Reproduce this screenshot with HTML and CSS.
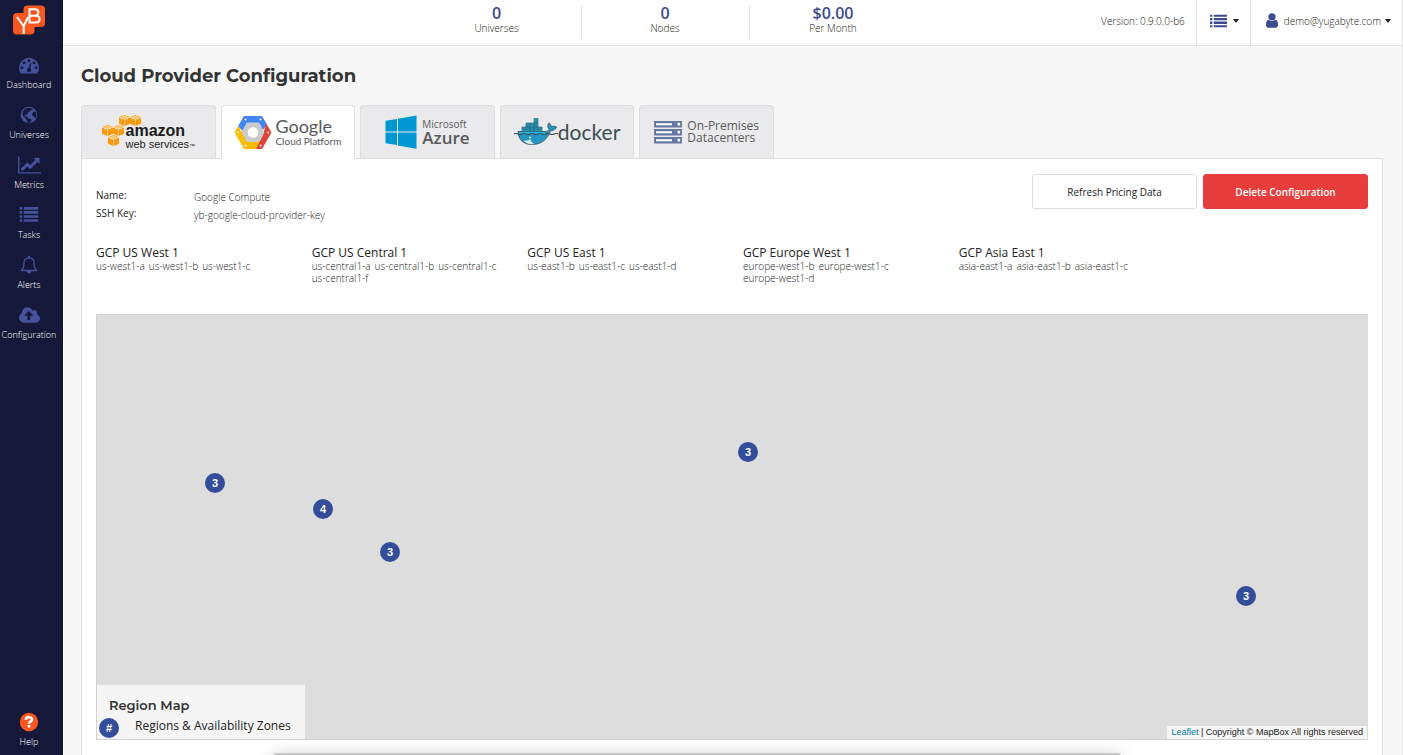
FILE: index.html
```html
<!DOCTYPE html>
<html lang="en">
<head>
<meta charset="utf-8">
<title>Cloud Provider Configuration</title>
<link rel="stylesheet" href="styles.css">
</head>
<body>
<svg width="0" height="0" class="defs" aria-hidden="true">
  <defs>
    <symbol id="list" viewBox="0 0 18 14"><path d="M0 0h2.500v2.500H0zM4 0h14v2.500H4zM0 3.800h2.500v2.500H0zM4 3.800h14v2.500H4zM0 7.600h2.500v2.500H0zM4 7.600h14v2.500H4zM0 11.400h2.500v2.500H0zM4 11.400h14v2.500H4z"/></symbol>
    <symbol id="box" viewBox="0 0 12 12"><path fill="#fbb034" d="M6 0L11.800 2 6 4.200 0.200 2z"/><path fill="#f79a0e" d="M0 2.600L5.700 4.800V12L0 9.600zM12 2.600L6.300 4.800V12l5.700-2.400z"/><path fill="none" stroke="#fde3b0" stroke-width=".6" d="M3 1l6 2.200v2M9 1L3 3.200v2"/></symbol>
  </defs>
</svg>
<div class="app">
  <nav class="sidebar">
    <a class="brand" href="#" aria-label="YugaByte home">
      <svg width="34" height="30" viewBox="0 0 34 30">
        <rect x="11.500" y="0.500" width="21.500" height="21.500" rx="4" fill="#f9571f"/>
        <rect x="1" y="8" width="21.500" height="21.500" rx="4" fill="#f9571f"/>
        <g fill="none" stroke="#fff" stroke-width="2">
          <path d="M5 12l6.700 9 4.500-9M11.700 20.500V29"/>
          <path d="M17.500 4.200v13.300h6.400c5 0 5-6.800 0-6.800h-6.400H23c4.500 0 4.500-6.500 0-6.500z"/>
        </g>
      </svg>
    </a>
    <a class="nav-item" href="#">
      <svg width="20" height="20" viewBox="0 0 1792 1792"><path d="M384 1152q0-53-37.500-90.500t-90.500-37.500-90.500 37.500-37.500 90.500 37.500 90.500 90.500 37.500 90.500-37.500 37.500-90.500zm192-448q0-53-37.500-90.500t-90.500-37.500-90.500 37.500-37.500 90.500 37.500 90.500 90.500 37.500 90.500-37.500 37.500-90.500zm428 481l101-382q6-26-7.500-48.500t-38.500-29.500-48 6.500-30 39.500l-101 382q-60 5-107 43.500t-63 98.500q-20 77 20 146t117 89 146-20 89-117q16-60-6-117t-72-91zm660-33q0-53-37.500-90.500t-90.500-37.500-90.500 37.500-37.500 90.500 37.500 90.500 90.500 37.500 90.500-37.500 37.500-90.500zm-640-640q0-53-37.500-90.500t-90.500-37.500-90.500 37.500-37.500 90.500 37.500 90.500 90.500 37.500 90.500-37.500 37.500-90.500zm448 192q0-53-37.500-90.500t-90.500-37.500-90.500 37.500-37.500 90.500 37.500 90.500 90.500 37.500 90.500-37.500 37.500-90.500zm320 448q0 261-141 483-19 29-54 29h-1402q-35 0-54-29-141-221-141-483 0-182 71-348t191-286 286-191 348-71 348 71 286 191 191 286 71 348z"/></svg>
      <span>Dashboard</span>
    </a>
    <a class="nav-item" href="#">
      <svg width="20" height="20" viewBox="0 0 20 20"><circle cx="10" cy="10" r="8.300"/><path fill="#151838" d="M8.500 3l2.500-.2 2.800 1.400-.8 1-1.600-.2-.4 1.200-1.600 1-1 1.400.6 1-1.600-.4-1.400.8.400 1.600 1.800.2.400 1.400 2.200.2 1.600 1.200-.2 1.600-1.600 1.600-1.200 1.400-.8-1.600-.4-2.200-1.600-1.600-.4-1.400-2-1-.8-2.400.6-2.600L5.500 4.500zM14.200 7l2.200-.6 1 2.400v2.600l-1.200 2-1.200-1.800-1.400-.6-.4-2z"/></svg>
      <span>Universes</span>
    </a>
    <a class="nav-item" href="#">
      <svg width="23" height="20" viewBox="0 0 2048 1792"><path d="M2048 1536v128h-2048v-1536h128v1408h1920zm-128-1248v435q0 21-19.500 29.500t-35.500-7.500l-121-121-633 633q-10 10-23 10t-23-10l-233-233-416 416-192-192 585-585q10-10 23-10t23 10l233 233 464-464-121-121q-16-16-7.500-35.500t29.500-19.500h435q14 0 23 9t9 23z"/></svg>
      <span>Metrics</span>
    </a>
    <a class="nav-item" href="#">
      <svg width="20" height="20" viewBox="0 0 20 20"><use href="#list" x="0.500" y="2" width="19" height="15"/></svg>
      <span>Tasks</span>
    </a>
    <a class="nav-item" href="#">
      <svg width="20" height="20" viewBox="0 0 20 20"><path fill="none" stroke="#43529a" stroke-width="1.300" stroke-linejoin="round" d="M10 2.800c-3.300 0-5 2.400-5 5.200 0 4.500-1.200 6.200-2.800 7.500h15.600C16.200 14.200 15 12.500 15 8c0-2.800-1.700-5.200-5-5.200z"/><path d="M9 1h2v2H9zM7.600 16h4.800c0 3.200-4.800 3.200-4.800 0z"/></svg>
      <span>Alerts</span>
    </a>
    <a class="nav-item" href="#">
      <svg width="21" height="20" viewBox="0 0 1920 1792"><path d="M1280 928q0-14-9-23l-352-352q-9-9-23-9t-23 9l-351 351q-10 12-10 24 0 14 9 23t23 9h224v352q0 13 9.500 22.500t22.500 9.500h192q13 0 22.500-9.500t9.500-22.500v-352h224q13 0 22.500-9.500t9.500-22.500zm640 288q0 159-112.500 271.500t-271.500 112.500h-1088q-185 0-316.500-131.500t-131.500-316.500q0-130 70-240t188-165q-2-30-2-43 0-212 150-362t362-150q156 0 285.500 87t188.500 231q71-62 166-62 106 0 181 75t75 181q0 76-41 138 130 31 213.500 135.500t83.500 238.500z"/></svg>
      <span>Configuration</span>
    </a>
    <a class="nav-item help" href="#">
      <svg width="20" height="20" viewBox="0 0 20 20"><circle cx="10" cy="10" r="9.200" fill="#f9571f"/><path fill="none" stroke="#fff" stroke-width="2.600" d="M6.800 7.800c.3-3.600 6.400-3.400 6.100 0-.2 1.900-2.900 1.800-2.900 4"/><path fill="#fff" d="M8.700 13h2.700v2.500H8.700z"/></svg>
      <span>Help</span>
    </a>
  </nav>

  <div class="page">
    <header class="topbar">
      <dl class="stats">
        <div><dd>0</dd><dt>Universes</dt></div>
        <div><dd>0</dd><dt>Nodes</dt></div>
        <div><dd>$0.00</dd><dt>Per Month</dt></div>
      </dl>
      <div class="tools">
        <span class="version">Version: 0.9.0.0-b6</span>
        <button class="tool" type="button" aria-label="Task list">
          <svg width="17" height="14" viewBox="0 0 18 14"><use href="#list"/></svg>
          <i class="caret"></i>
        </button>
        <button class="tool user" type="button">
          <svg width="12" height="15" viewBox="0 0 12 15"><circle cx="6" cy="3.800" r="3.600"/><path d="M2.600 6.500C.6 7 0 9.500 0 12c0 1.800 1 2.800 2.500 2.800h7C11 14.800 12 13.800 12 12c0-2.500-.6-5-2.600-5.500-1.800 2-5 2-6.800 0z"/></svg>
          <span>demo@yugabyte.com</span>
          <i class="caret"></i>
        </button>
      </div>
    </header>

    <main class="content">
      <h1>Cloud Provider Configuration</h1>
      <div class="tabs" role="tablist">
        <button class="tab aws" role="tab" type="button">
          <svg width="40" height="34" viewBox="0 0 40 34"><use href="#box" x="17" y="0" width="11" height="11"/><use href="#box" x="28" y="0" width="11" height="11"/><use href="#box" x="0" y="10" width="11" height="11"/><use href="#box" x="11" y="10" width="11" height="11"/><use href="#box" x="6" y="20" width="11" height="11"/></svg>
          <span class="logo-text"><b>amazon</b><span>web services<small>™</small></span></span>
        </button>
        <button class="tab google active" role="tab" type="button" aria-selected="true">
          <svg width="38" height="35" viewBox="0 0 38 35"><path fill="#4285f4" d="M10 1h18l5 8.500-4 5.500-4-7H13L8.500 16 4 11z"/><path fill="#fbbc05" d="M4 11L0.500 17.500 10 34h14l4-8H13L8.500 18z"/><path fill="#db4437" d="M32 8l5.500 9.500L28 34h-6l7.500-15.500z"/><path fill="#c9cacc" d="M13 7.500h12l5.500 10-5.500 9.500H13L7.500 17.500z"/><circle cx="19" cy="17.500" r="5.300" fill="#fff"/><g fill="#fff"><circle cx="11.500" cy="4.500" r="1"/><circle cx="26.500" cy="4.500" r="1"/><circle cx="3.800" cy="17.500" r="1"/><circle cx="34.200" cy="17.500" r="1"/><circle cx="11.500" cy="30.500" r="1"/><circle cx="26.500" cy="30.500" r="1"/></g></svg>
          <span class="logo-text"><b>Google</b><span>Cloud Platform</span></span>
        </button>
        <button class="tab azure" role="tab" type="button">
          <svg width="32" height="34" viewBox="0 0 32 34"><path fill="#0097d3" d="M0.500 5.800L12 4v12.500H0.500zM13 3.800L31.500.500v16H13zM0.500 17.500H12V30L0.500 28.200zM13 17.500h18.500v16.300L13 30.500z"/></svg>
          <span class="logo-text"><span>Microsoft</span><b>Azure</b></span>
        </button>
        <button class="tab docker" role="tab" type="button">
          <svg width="44" height="28" viewBox="0 0 44 28">
            <path fill="#2496c3" stroke="#394d54" stroke-width=".8" d="M4 13.500h27c2 0 3.500-.8 4.200-2-2-2-1.700-4.500-.2-6.500 1.500 1 2.300 2.300 2.400 3.700 1.800-.7 3.700-.7 5.300.3-1 2.600-3.300 3.600-6 3.600C33.500 21 28 26.500 18 26.500 9 26.500 4.500 21.500 4 13.500z"/>
            <path fill="#dbe9ef" d="M9.500 22.500c2.500.6 5-.2 7-1.500.3 2.300 1.700 4.200 4 5.100-4.500.8-8.500-.6-11-3.600z"/><circle cx="16" cy="19.500" r="1" fill="#fff"/>
            <path fill="#27b4e0" d="M5 14h26v2.300H5z"/><path fill="none" stroke="#394d54" stroke-width="1.200" d="M0 16q2-1 4 0t4 0 4 0 4 0 4 0 4 0 4 0 4 0 4 0 4 0 5 0"/>
            <path fill="#2b8fa9" stroke="#24738e" stroke-width=".7" d="M8 9h4v4.500H8zM12 9h4v4.500h-4zM16 9h4v4.500h-4zM20 9h4v4.500h-4zM24 9h4v4.500h-4zM12 5h4v4h-4zM16 5h4v4h-4zM20 5h4v4h-4zM20 .500h4V5h-4z"/>
          </svg>
          <span class="logo-text">docker</span>
        </button>
        <button class="tab onprem" role="tab" type="button">
          <svg width="28" height="23" viewBox="0 0 28 23"><g fill="#6679a5"><path d="M0 0h28v6.500H0zM0 8h28v6.500H0zM0 16h28v6.500H0z"/></g><g fill="#fff"><path d="M2 2.200h16v2H2zM2 10.200h16v2H2zM2 18.200h16v2H2zM23.500 1.800h2.600v2.800h-2.600zM23.500 9.800h2.600v2.800h-2.600zM23.500 17.800h2.600v2.800h-2.600z"/></g></svg>
          <span class="logo-text">On-Premises<br>Datacenters</span>
        </button>
      </div>

      <section class="panel">
        <div class="summary">
          <dl class="details">
            <dt>Name:</dt><dd>Google Compute</dd>
            <dt>SSH Key:</dt><dd>yb-google-cloud-provider-key</dd>
          </dl>
          <div class="actions">
            <button class="btn" type="button">Refresh Pricing Data</button>
            <button class="btn danger" type="button">Delete Configuration</button>
          </div>
        </div>

        <div class="regions">
          <div><h2>GCP US West 1</h2><p><span>us-west1-a</span><span>us-west1-b</span><span>us-west1-c</span></p></div>
          <div><h2>GCP US Central 1</h2><p><span>us-central1-a</span><span>us-central1-b</span><span>us-central1-c</span><span>us-central1-f</span></p></div>
          <div><h2>GCP US East 1</h2><p><span>us-east1-b</span><span>us-east1-c</span><span>us-east1-d</span></p></div>
          <div><h2>GCP Europe West 1</h2><p><span>europe-west1-b</span><span>europe-west1-c</span><span>europe-west1-d</span></p></div>
          <div><h2>GCP Asia East 1</h2><p><span>asia-east1-a</span><span>asia-east1-b</span><span>asia-east1-c</span></p></div>
        </div>

        <div class="map">
          <span class="pin west">3</span>
          <span class="pin central">4</span>
          <span class="pin east">3</span>
          <span class="pin europe">3</span>
          <span class="pin asia">3</span>
          <div class="legend">
            <h3>Region Map</h3>
            <p><span class="marker">#</span>Regions &amp; Availability Zones</p>
          </div>
          <div class="credit"><a href="#">Leaflet</a> | Copyright © MapBox All rights reserved</div>
        </div>
      </section>
    </main>
  </div>
  <div class="drawer"></div>
</div>
</body>
</html>
```
FILE: styles.css
```css
* { box-sizing: border-box; }
body {
  margin: 0;
  background: #f7f7f7;
  color: #222;
  font: 300 11px/16px "Open Sans", "Noto Sans", sans-serif;
}
h1, h2, h3, p, dl, dd, dt { margin: 0; }
button { font: inherit; color: inherit; cursor: pointer; }
a { text-decoration: none; }
svg { display: block; flex: none; }
.defs { position: absolute; }

.app { position: relative; display: flex; min-height: 100vh; overflow: hidden; }

/* Sidebar */
.sidebar {
  flex: none;
  display: flex;
  flex-direction: column;
  width: 63px;
  padding: 5px 5px 5px 0;
  background: #151838;
}
.brand { display: flex; justify-content: center; height: 50px; }
.nav-item {
  display: flex;
  flex-direction: column;
  align-items: center;
  gap: 2px;
  height: 50px;
  color: #fff;
  font-size: 9px;
  font-weight: 300;
}
.nav-item svg { fill: #43529a; }
.help { margin-top: auto; height: 38px; }

/* Header */
.page { flex: 1; min-width: 0; display: flex; flex-direction: column; border-right: 1px solid #e5e5e5; }
.topbar {
  display: grid;
  grid-template-columns: 1fr auto 1fr;
  height: 46px;
  background: #fff;
  border-bottom: 1px solid #e3e3e3;
}
.stats { grid-column: 2; display: flex; padding: 5px 0 7px; margin-right: 136px; }
.stats div { display: flex; flex-direction: column; width: 168px; text-align: center; }
.stats div + div { border-left: 1px solid #e3e3e3; }
.stats dd { color: #3a4a8f; font-size: 16px; font-weight: 600; line-height: 17px; }
.stats dt { font-size: 10px; line-height: 12px; }
.tools { display: flex; justify-content: flex-end; align-items: stretch; }
.version { align-self: center; padding: 0 11px 4px 0; font-size: 10px; white-space: nowrap; }
.tool {
  display: flex;
  align-items: center;
  gap: 6px;
  padding: 0 11px 4px 13px;
  border: 0;
  border-left: 1px solid #e3e3e3;
  background: none;
  fill: #3a4a8f;
  font-size: 10px;
}
.user { padding: 0 11px 4px 15px; }
.user .caret { margin-left: -2px; }
.caret { border: 3px solid transparent; border-top: 4px solid #222; border-bottom: 0; }

/* Content */
.content { flex: 1; display: flex; flex-direction: column; padding: 18px 19px 0 18px; }
h1 { margin-bottom: 17px; font: 700 18px/24px "Montserrat", "Inter", sans-serif; color: #333; }
.tabs { display: grid; grid-template-columns: repeat(5, 1fr); gap: 5px; max-width: 693px; height: 53px; }
.tab {
  display: flex;
  justify-content: center;
  align-items: center;
  height: 53px;
  padding: 0;
  border: 1px solid #dedede;
  border-bottom: 0;
  border-radius: 4px 4px 0 0;
  background: #eaeaec;
  color: #58595b;
  white-space: nowrap;
}
.tab.active { position: relative; height: 54px; background: #fff; }
.logo-text { display: flex; flex-direction: column; align-items: flex-start; text-align: left; }
.aws svg { margin-right: -16px; }
.aws .logo-text { padding-top: 10px; color: #1c1c1c; font: 400 11px/12px "Liberation Sans", sans-serif; }
.aws b { font: 700 16px/14px "Liberation Sans", sans-serif; }
.aws small { font-size: 6px; line-height: 6px; }
.google { gap: 3px; }
.google .logo-text { font: 400 10px/13px "Lato", sans-serif; }
.google b { font: 400 18px/18px "Lato", sans-serif; }
.azure { gap: 5px; }
.azure .logo-text { font-size: 10px; font-weight: 400; line-height: 12px; }
.azure b { font-size: 17px; font-weight: 600; line-height: 16px; }
.docker .logo-text { color: #394d54; font: 400 21px/24px "Lato", sans-serif; }
.onprem { gap: 5px; }
.onprem .logo-text { font-size: 12px; font-weight: 400; line-height: 12px; }

/* Panel */
.panel {
  flex: 1;
  padding: 15px 14px;
  border: 1px solid #dedede;
  border-bottom: 0;
  background: #fff;
}
.summary { display: flex; justify-content: space-between; }
.details { display: grid; grid-template-columns: 98px auto; margin-top: 12px; line-height: 18px; align-content: start; font-size: 10px; }
.details dt { font-weight: 400; }
.details dd { padding-top: 2px; margin-bottom: -2px; }
.actions { display: flex; gap: 6px; }
.btn {
  width: 165px;
  height: 35px;
  border: 1px solid #ddd;
  border-radius: 3px;
  background: #fff;
  font-size: 10px;
  font-weight: 400;
}
.danger { border-color: #e73d3d; background: #e73d3d; color: #fff; font-weight: 600; }
.regions { display: grid; grid-template-columns: repeat(6, 1fr); gap: 22px; margin: 24px 0 30px; }
.regions h2 { font-size: 12px; font-weight: 400; line-height: 14px; }
.regions p { font-size: 10px; line-height: 12px; }
.regions span { display: inline-block; margin-right: 4px; }

/* Map */
.map { position: relative; height: 426px; background: #ddd; border: 1px solid #d2d2d2; border-right-color: #ddd; }
.pin, .marker {
  width: 20px;
  height: 20px;
  border-radius: 50%;
  background: #344d9b;
  color: #fff;
  font: 700 11px/20px "Liberation Sans", sans-serif;
  text-align: center;
}
.pin { position: absolute; }
.west { left: 108px; top: 158px; }
.central { left: 216px; top: 184px; }
.east { left: 283px; top: 227px; }
.europe { left: 641px; top: 127px; }
.asia { left: 1139px; top: 271px; }
.legend { position: absolute; left: 0; bottom: 0; width: 208px; padding: 11px 0 0 2px; background: #f5f5f5; }
.legend h3 { padding-left: 10px; font: 600 13px/18px "Montserrat", "Inter", sans-serif; color: #333; }
.legend p { display: flex; gap: 16px; height: 25px; font-size: 12px; font-weight: 400; line-height: 24px; white-space: nowrap; }
.marker { margin-top: 4px; }
.credit {
  position: absolute;
  right: 0;
  bottom: 0;
  padding: 0 4px;
  background: #f5f5f5;
  font: 400 9px/13px "Liberation Sans", Arial, sans-serif;
}
.credit a { color: #0078a8; }

/* Collapsed drawer whose edge shows above the bottom of the window */
.drawer {
  position: absolute;
  left: 272px;
  right: 281px;
  bottom: -8px;
  height: 10px;
  border-radius: 5px;
  background: #c6c6c6;
  box-shadow: 0 2px 16px rgba(0, 0, 0, .22);
}
```
